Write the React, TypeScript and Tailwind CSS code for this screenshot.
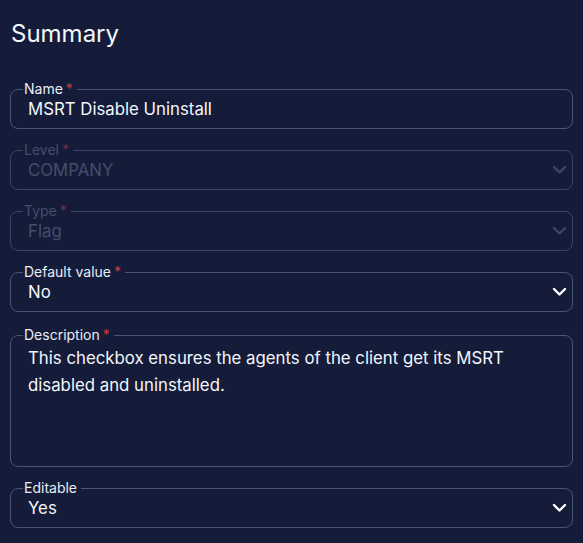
import type { ReactNode } from "react";

type FieldProps = {
  label: string;
  required?: boolean;
  disabled?: boolean;
  className?: string;
  children: ReactNode;
};

function Field({ label, required, disabled, className = "", children }: FieldProps) {
  return (
    <fieldset
      className={`min-w-0 rounded-lg border pl-[13px] pr-[5px] ${
        disabled ? "border-[#3a4462]" : "border-[#4a5473]"
      } ${className}`}
    >
      <legend
        className={`-ml-[1px] px-[1px] pr-[4px] text-[14px] leading-[14px] ${
          disabled ? "text-[#444e6c]" : "text-[#e9edf5]"
        }`}
      >
        {label}
        {required && (
          <span className={`ml-[3px] ${disabled ? "text-[#7a2e3c]" : "text-[#d23b3b]"}`}>*</span>
        )}
      </legend>
      {children}
    </fieldset>
  );
}

function Chevron({ disabled }: { disabled?: boolean }) {
  return (
    <svg width="15" height="10" viewBox="0 0 15 10" className="shrink-0">
      <path
        d="M2 2l5.5 5.5L13 2"
        fill="none"
        stroke={disabled ? "#3c4664" : "#ffffff"}
        strokeWidth="2.4"
        strokeLinecap="round"
        strokeLinejoin="round"
      />
    </svg>
  );
}

function SelectField({
  label,
  value,
  disabled,
  required = true,
}: {
  label: string;
  value: string;
  disabled?: boolean;
  required?: boolean;
}) {
  return (
    <Field label={label} required={required} disabled={disabled}>
      <div className="flex items-center justify-between pb-[7px] pt-[1px]">
        <span
          className={`ml-[4px] text-[16.8px] leading-[24px] ${
            disabled ? "text-[#444e6c]" : "text-[#f4f6fa]"
          }`}
        >
          {value}
        </span>
        <Chevron disabled={disabled} />
      </div>
    </Field>
  );
}

export default function App() {
  return (
    <div
      className="min-h-screen bg-[#141c3a] px-[10px] pt-[18px]"
      style={{ fontFamily: "Inter, 'Noto Sans', sans-serif" }}
    >
      <h2 className="ml-[1px] text-[24px] leading-[32px] text-[#f4f6fa]">Summary</h2>
      <div className="mt-[32px] flex flex-col gap-[14px]">
        <Field label="Name" required>
          <div className="ml-[4px] pb-[7px] pt-[1px] text-[16.8px] leading-[24px] text-[#f4f6fa]">
            MSRT Disable Uninstall
          </div>
        </Field>
        <SelectField label="Level" value="COMPANY" disabled />
        <SelectField label="Type" value="Flag" disabled />
        <SelectField label="Default value" value="No" />
        <Field label="Description" required className="mt-[2px]">
          <div className="ml-[4px] h-[124px] pr-[30px] pt-[3px] text-[16.8px] leading-[27px] text-[#f4f6fa]">
            This checkbox ensures the agents of the client get its MSRT disabled and uninstalled.
          </div>
        </Field>
        <SelectField label="Editable" value="Yes" required={false} />
      </div>
    </div>
  );
}
